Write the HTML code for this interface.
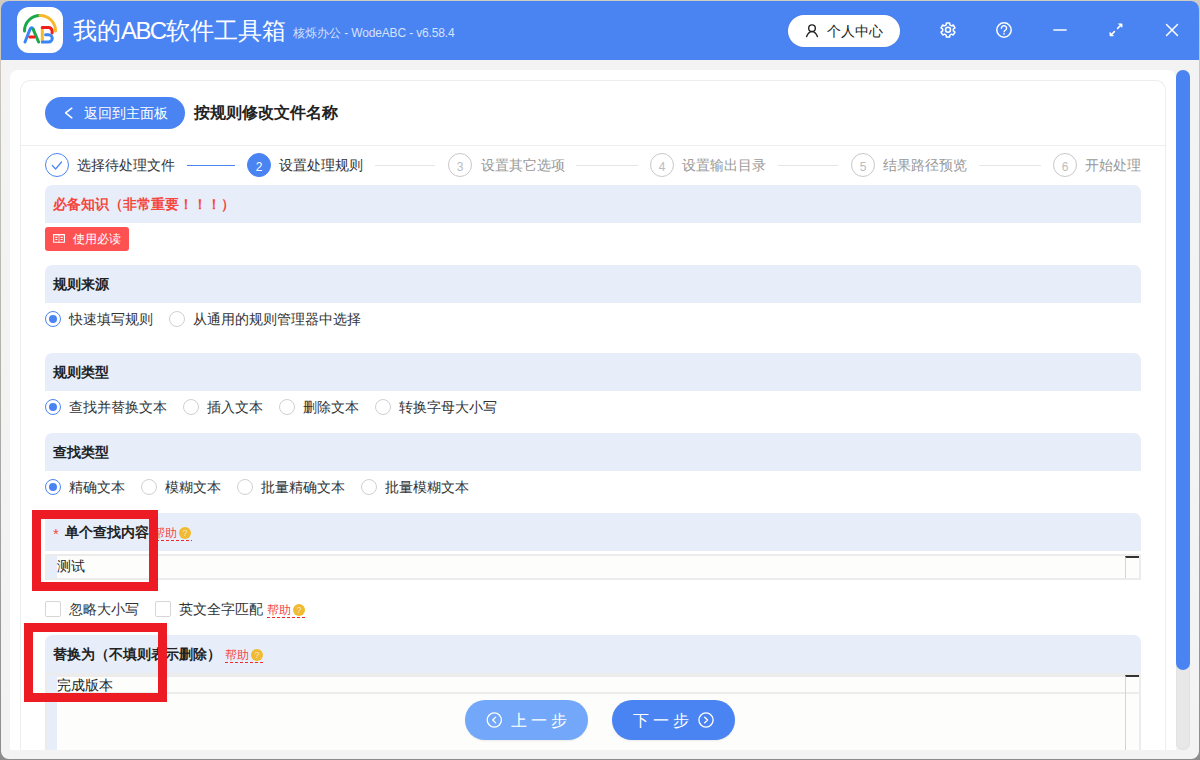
<!DOCTYPE html>
<html><head><meta charset="utf-8">
<style>
*{margin:0;padding:0;box-sizing:border-box}
html,body{width:1200px;height:760px;overflow:hidden;background:linear-gradient(#d0ccc2,#b8b6b0 40%,#8c8c8c)}
body{font-family:"Liberation Sans",sans-serif;color:#333;position:relative}
.a{position:absolute;white-space:nowrap}
.bar{position:absolute;left:45px;width:1096px;height:38px;background:#e8eef9;border-radius:7px 7px 0 0}
.bt{position:absolute;left:53px;font-size:14px;font-weight:bold;color:#222;line-height:16px;white-space:nowrap}
.radio{position:absolute;width:16px;height:16px;border:1px solid #d0d0d0;border-radius:50%;background:#fff}
.radio.on{border-color:#4a84f2}
.radio.on::after{content:"";position:absolute;left:3px;top:3px;width:8px;height:8px;border-radius:50%;background:#4a84f2}
.rl{position:absolute;font-size:14px;line-height:16px;color:#333;white-space:nowrap}
.step{position:absolute;top:153px;width:24px;height:24px;border-radius:50%;border:1px solid #c8c8c8;color:#bcbcbc;font-size:12px;line-height:27px;text-align:center}
.st{position:absolute;top:157px;font-size:14px;line-height:16px;color:#999;white-space:nowrap}
.ln{position:absolute;top:165px;height:1px;background:#e6e6e6}
.help{position:absolute;font-size:12px;line-height:14px;color:#f24a4a;white-space:nowrap}
.dl{position:absolute;height:1px;background:repeating-linear-gradient(90deg,#f02a2a 0 3px,transparent 3px 5px)}
.q{position:absolute;width:12px;height:12px;border-radius:50%;background:#f0bb33;color:rgba(255,255,255,.65);font-size:9px;line-height:12px;text-align:center}
.cb{position:absolute;width:16px;height:16px;border:1px solid #d6d6d6;border-radius:2px;background:#fff}
.redbox{position:absolute;border:9px solid #ed1c24}
</style></head><body>
<!-- window -->
<div class="a" style="left:1px;top:1px;width:1198px;height:758px;background:#f3f3f3;border-radius:8px;overflow:hidden">
  <div class="a" style="left:0;top:0;width:1198px;height:59px;background:#4a84f2"></div>
</div>
<!-- logo -->
<div class="a" style="left:17px;top:7px;width:46px;height:46px;background:#fff;border-radius:12px"></div>
<div class="a" style="left:73px;top:17px;font-size:24px;line-height:28px;color:#fff">我的<span style="letter-spacing:-1.6px">ABC</span>软件工具箱</div>
<div class="a" style="left:293px;top:26px;font-size:12px;line-height:14px;color:rgba(255,255,255,.78)">核烁办公<span style="letter-spacing:-0.15px"> - WodeABC - v6.58.4</span></div>
<div class="a" style="left:788px;top:15px;width:112px;height:32px;background:#fff;border-radius:16px;box-shadow:0 0 1px rgba(120,100,60,.35)"></div>
<div class="a" style="left:827px;top:23px;font-size:14px;line-height:16px;color:#222">个人中心</div>

<!-- scroll area -->
<div class="a" style="left:10px;top:70px;width:1166px;height:680px;background:#fff;border-radius:8px 8px 0 0"></div>
<div class="a" style="left:1176px;top:70px;width:14px;height:680px;background:#e8e8e8;border-radius:7px;box-shadow:inset 0 0 2px rgba(0,0,0,.1)"></div>
<div class="a" style="left:1176px;top:70px;width:14px;height:600px;background:#4a84f2;border-radius:7px"></div>
<div class="a" style="left:20px;top:80px;width:1146px;height:670px;border:1px solid #ededed;border-bottom:none;border-radius:10px 10px 0 0"></div>
<div class="a" style="left:21px;top:145px;width:1144px;height:1px;background:#ededed"></div>

<!-- back button -->
<div class="a" style="left:45px;top:97px;width:140px;height:32px;background:#4a84f2;border-radius:16px"></div>
<div class="a" style="left:84px;top:105px;font-size:14px;line-height:16px;color:#fff">返回到主面板</div>
<div class="a" style="left:194px;top:104px;font-size:16px;line-height:18px;font-weight:bold;color:#222">按规则修改文件名称</div>

<!-- steps -->
<div class="step" style="left:45px;border-color:#4a84f2;color:#4a84f2"></div>
<div class="st" style="left:77px;color:#333">选择待处理文件</div>
<div class="ln" style="left:187px;width:48px;background:#4a84f2"></div>
<div class="step" style="left:247px;border-color:#4a84f2;background:#4a84f2;color:#fff">2</div>
<div class="st" style="left:279px;color:#333">设置处理规则</div>
<div class="ln" style="left:375px;width:60px"></div>
<div class="step" style="left:448px">3</div>
<div class="st" style="left:481px">设置其它选项</div>
<div class="ln" style="left:576px;width:62px"></div>
<div class="step" style="left:650px">4</div>
<div class="st" style="left:682px">设置输出目录</div>
<div class="ln" style="left:778px;width:60px"></div>
<div class="step" style="left:851px">5</div>
<div class="st" style="left:883px">结果路径预览</div>
<div class="ln" style="left:979px;width:62px"></div>
<div class="step" style="left:1053px">6</div>
<div class="st" style="left:1085px">开始处理</div>

<!-- 必备知识 -->
<div class="bar" style="top:185px"></div>
<div class="bt" style="top:196px;color:#f5473e">必备知识（非常重要！！！）</div>
<div class="a" style="left:45px;top:227px;width:84px;height:24px;background:#fe5252;border-radius:3px"></div>
<div class="a" style="left:73px;top:232px;font-size:12px;line-height:14px;color:#fff">使用必读</div>

<!-- 规则来源 -->
<div class="bar" style="top:265px"></div>
<div class="bt" style="top:276px">规则来源</div>
<div class="radio on" style="left:45px;top:311px"></div><div class="rl" style="left:69px;top:311px">快速填写规则</div>
<div class="radio" style="left:169px;top:311px"></div><div class="rl" style="left:193px;top:311px">从通用的规则管理器中选择</div>

<!-- 规则类型 -->
<div class="bar" style="top:353px"></div>
<div class="bt" style="top:364px">规则类型</div>
<div class="radio on" style="left:45px;top:399px"></div><div class="rl" style="left:69px;top:399px">查找并替换文本</div>
<div class="radio" style="left:183px;top:399px"></div><div class="rl" style="left:207px;top:399px">插入文本</div>
<div class="radio" style="left:279px;top:399px"></div><div class="rl" style="left:303px;top:399px">删除文本</div>
<div class="radio" style="left:375px;top:399px"></div><div class="rl" style="left:399px;top:399px">转换字母大小写</div>

<!-- 查找类型 -->
<div class="bar" style="top:433px"></div>
<div class="bt" style="top:444px">查找类型</div>
<div class="radio on" style="left:45px;top:479px"></div><div class="rl" style="left:69px;top:479px">精确文本</div>
<div class="radio" style="left:141px;top:479px"></div><div class="rl" style="left:165px;top:479px">模糊文本</div>
<div class="radio" style="left:237px;top:479px"></div><div class="rl" style="left:261px;top:479px">批量精确文本</div>
<div class="radio" style="left:361px;top:479px"></div><div class="rl" style="left:385px;top:479px">批量模糊文本</div>

<!-- 单个查找内容 -->
<div class="bar" style="top:513px"></div>
<div class="bt" style="top:526px;left:53px;font-size:15px;color:#f04848;font-weight:normal">*</div>
<div class="bt" style="left:65px;top:524px">单个查找内容</div>
<div class="help" style="left:153px;top:526px">帮助</div>
<div class="q" style="left:179px;top:527px">?</div><div class="dl" style="left:156px;top:540px;width:36px"></div>
<div class="a" style="left:45px;top:554px;width:1096px;height:26px;border:2px solid #ececec;background:#fdfdfb"></div>
<div class="a" style="left:47px;top:556px;width:10px;height:22px;background:#e8eef9"></div>
<div class="rl" style="left:57px;top:558px;color:#222">测试</div>
<div class="a" style="left:1125px;top:556px;width:14px;height:22px;border-left:1px solid #d4d4d4;border-top:2px solid #333"></div>

<!-- checkboxes -->
<div class="cb" style="left:45px;top:601px"></div><div class="rl" style="left:69px;top:601px">忽略大小写</div>
<div class="cb" style="left:155px;top:601px"></div><div class="rl" style="left:179px;top:601px">英文全字匹配</div>
<div class="help" style="left:267px;top:603px">帮助</div>
<div class="q" style="left:293px;top:604px">?</div><div class="dl" style="left:267px;top:617px;width:39px"></div>

<!-- 替换为 -->
<div class="bar" style="top:635px"></div>
<div class="bt" style="top:646px">替换为（不填则表示删除）</div>
<div class="help" style="left:225px;top:648px">帮助</div>
<div class="q" style="left:251px;top:649px">?</div><div class="dl" style="left:225px;top:662px;width:39px"></div>
<div class="a" style="left:45px;top:673px;width:1096px;height:77px;background:#ececec"></div>
<div class="a" style="left:47px;top:675px;width:10px;height:75px;background:#e8eef9"></div>
<div class="a" style="left:57px;top:677px;width:1082px;height:73px;background:#fdfdfb"></div>
<div class="a" style="left:57px;top:692px;width:1082px;height:2px;background:#ececec"></div>
<div class="rl" style="left:57px;top:677px;color:#222">完成版本</div>
<div class="a" style="left:1125px;top:675px;width:14px;height:75px;border-left:1px solid #d4d4d4;border-top:2px solid #333"></div>

<!-- footer buttons -->
<div class="a" style="left:465px;top:700px;width:123px;height:40px;background:#72a7f9;border-radius:20px;box-shadow:0 1px 2px rgba(0,0,0,.08)"></div>
<div class="a" style="left:511px;top:712px;font-size:16px;line-height:18px;color:#fff;letter-spacing:4px">上一步</div>
<div class="a" style="left:612px;top:700px;width:123px;height:40px;background:#4a84f2;border-radius:20px;box-shadow:0 1px 2px rgba(0,0,0,.08)"></div>
<div class="a" style="left:633px;top:712px;font-size:16px;line-height:18px;color:#fff;letter-spacing:4px">下一步</div>

<svg class="a" style="left:0;top:0" width="1200" height="760" viewBox="0 0 1200 760" fill="none" stroke-linecap="round" stroke-linejoin="round">
  <!-- logo -->
  <g transform="translate(17 7)" stroke-width="3">
    <path d="M7.5 24 A15.5 15.5 0 0 1 23 8.5" stroke="#1aa84b"/>
    <path d="M23 8.5 A15.5 15.5 0 0 1 38.5 24" stroke="#f8b82c"/>
    <path d="M8 35 L13 22.3 Q14.6 19.2 16.2 22.3" stroke="#3a86f5"/>
    <path d="M16.2 22.3 L21.6 35" stroke="#1aa84b"/>
    <path d="M12.8 30 H17.2" stroke="#f01f1f"/>
    <path d="M25.3 20.6 V35" stroke="#f8b82c"/>
    <path d="M25.3 20.6 H31.6 A3.5 3.5 0 0 1 35.1 24.1 V26" stroke="#f01f1f"/>
    <path d="M28.6 27.7 H31.6 A3.65 3.65 0 0 1 31.6 35 H25.3" stroke="#3a86f5"/>
  </g>
  <!-- person -->
  <g stroke="#222" stroke-width="1.4">
    <circle cx="812" cy="28.2" r="3.3"/>
    <path d="M806.6 36.6 Q808.5 31.6 812 31.6 Q815.5 31.6 817.4 36.6"/>
  </g>
  <!-- gear -->
  <path d="M949.85 24.93 L949.64 22.89 L946.36 22.89 L946.15 24.93 L944.53 25.86 L942.66 25.02 L941.02 27.87 L942.68 29.06 L942.68 30.94 L941.02 32.13 L942.66 34.98 L944.53 34.14 L946.15 35.07 L946.36 37.11 L949.64 37.11 L949.85 35.07 L951.47 34.14 L953.34 34.98 L954.98 32.13 L953.32 30.94 L953.32 29.06 L954.98 27.87 L953.34 25.02 L951.47 25.86 Z" stroke="#fff" stroke-width="1.5"/>
  <circle cx="948" cy="29.8" r="2.5" stroke="#fff" stroke-width="1.5"/>
  <!-- help -->
  <circle cx="1004" cy="30" r="7.2" stroke="#fff" stroke-width="1.5"/>
  <path d="M1001.4 28.3 A2.6 2.4 0 1 1 1005.6 30 Q1004.2 30.8 1004.1 31.8" stroke="#fff" stroke-width="1.4"/>
  <circle cx="1004" cy="33.9" r="0.8" fill="#fff" stroke="none"/>
  <!-- minimize -->
  <path d="M1053.3 30 H1066.7" stroke="#dfe8fc" stroke-width="1.8" stroke-linecap="butt"/>
  <!-- maximize -->
  <g stroke="#fff" stroke-width="1.6">
    <path d="M1117.6 28.4 L1120.8 25.2"/>
    <path d="M1114.4 31.6 L1111.2 34.8"/>
  </g>
  <path d="M1119 23.9 H1122 V26.9 Z" fill="#fff" stroke="#fff" stroke-width="0.9"/>
  <path d="M1113 35.8 H1110 V32.8 Z" fill="#fff" stroke="#fff" stroke-width="0.9"/>
  <!-- close -->
  <path d="M1166.5 24.5 L1177.5 35.5 M1177.5 24.5 L1166.5 35.5" stroke="#fff" stroke-width="1.5"/>
  <!-- back chevron -->
  <path d="M71.8 108.2 L65.6 112.9 L71.8 117.9" stroke="#fff" stroke-width="1.5"/>
  <!-- step1 check -->
  <path d="M52.3 165.5 L55.6 169 L61.5 162" stroke="#4a84f2" stroke-width="1.2"/>
  <!-- book -->
  <g stroke="#fff" stroke-width="1.1" stroke-linecap="butt">
    <path d="M53.6 234.6 H58.3 L59 235.3 L59.7 234.6 H64.4 V242.3 H53.6 Z" stroke-linejoin="miter"/>
    <path d="M59 235.3 V242.3" stroke-opacity=".6"/>
    <path d="M55.3 237.4 H57.4 M55.3 239.5 H57.4 M60.6 237.4 H62.7 M60.6 239.5 H62.7"/>
  </g>
  <!-- footer circle arrows -->
  <circle cx="494.3" cy="720" r="7.1" stroke="#fff" stroke-width="1.3"/>
  <path d="M495.6 717.3 L492.7 720 L495.6 722.7" stroke="#fff" stroke-width="1.3"/>
  <circle cx="706" cy="720" r="7.1" stroke="#fff" stroke-width="1.3"/>
  <path d="M704.7 717.3 L707.6 720 L704.7 722.7" stroke="#fff" stroke-width="1.3"/>
</svg>

<!-- annotation boxes -->
<div class="redbox" style="left:32px;top:510px;width:126px;height:81px"></div>
<div class="redbox" style="left:24px;top:623px;width:143px;height:79px"></div>
</body></html>
